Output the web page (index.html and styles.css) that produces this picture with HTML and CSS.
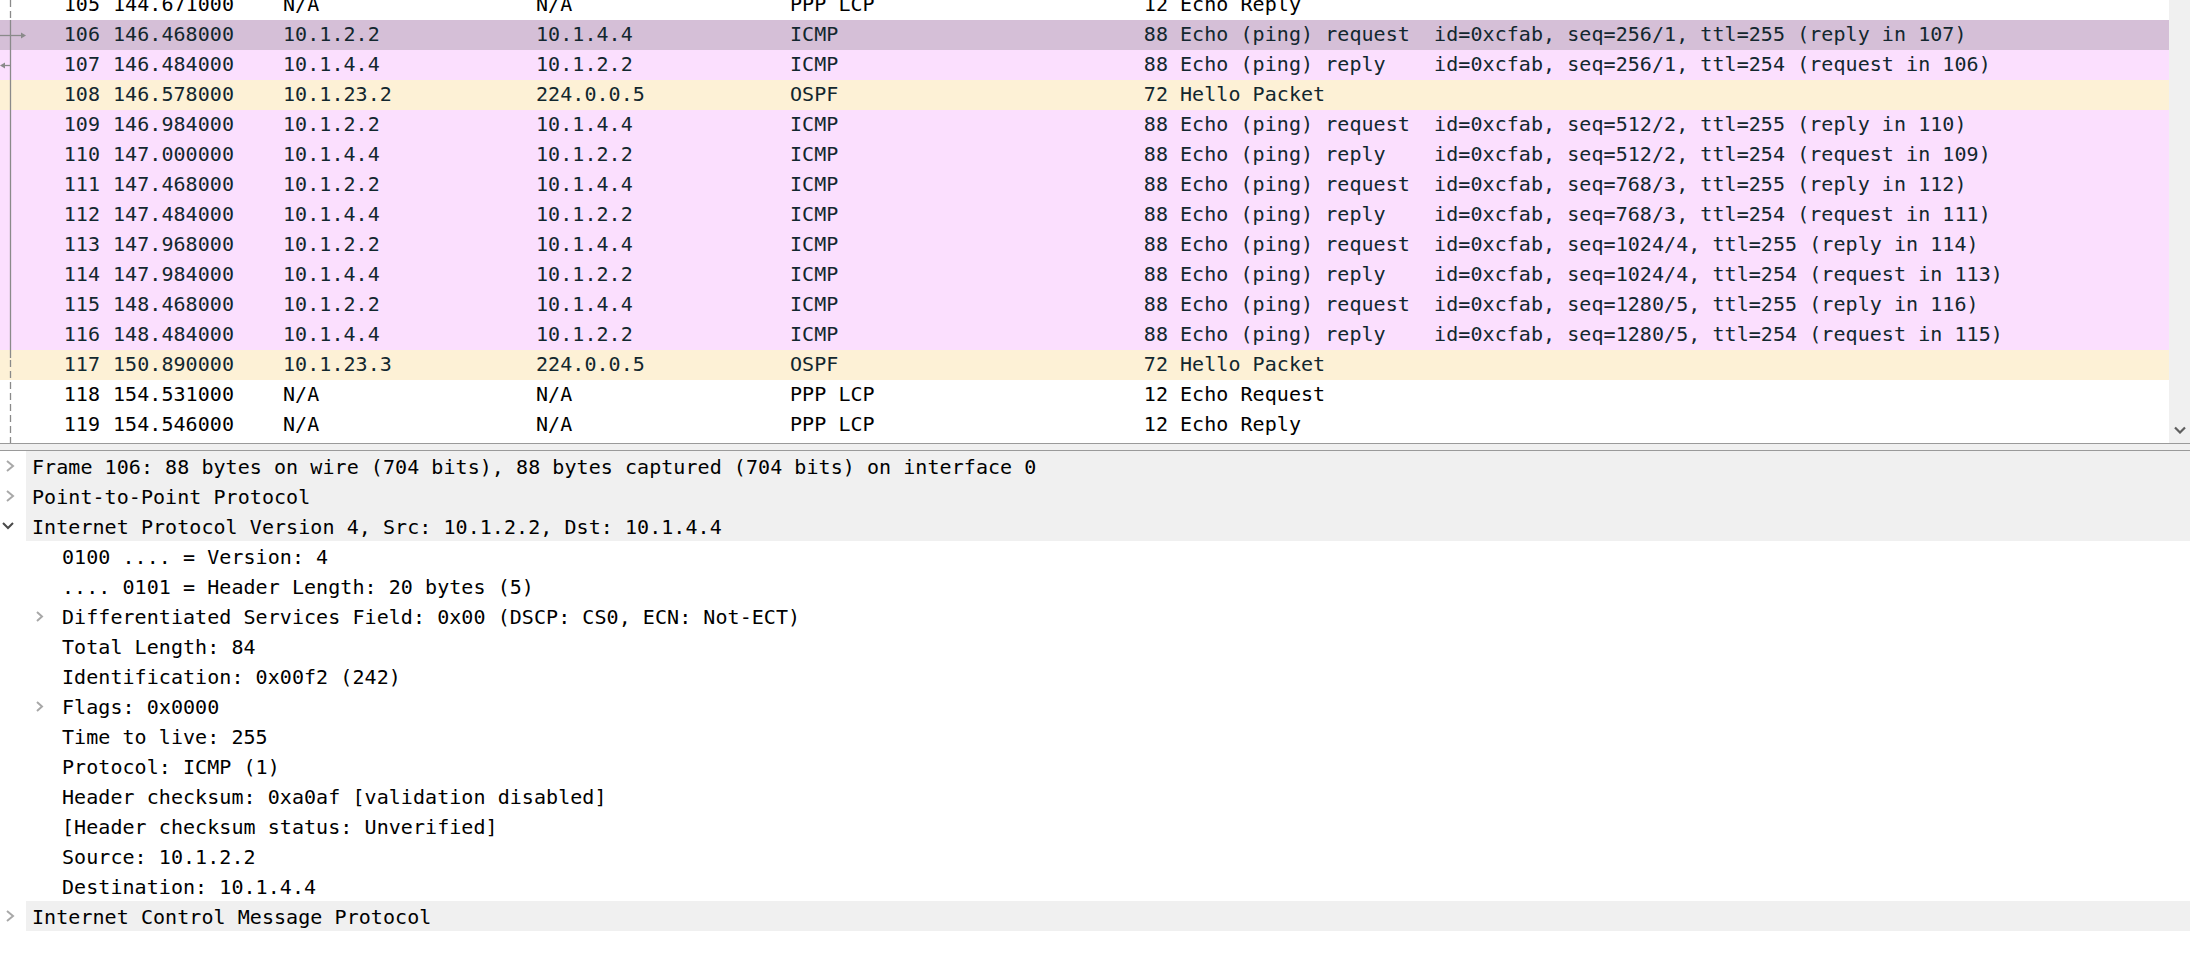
FILE: index.html
```html
<!DOCTYPE html>
<html>
<head>
<meta charset="utf-8">
<link rel="stylesheet" href="styles.css">
</head>
<body>
<div class="app">
  <div class="packet-list">
    <div class="rows">
      <div class="row plain first"><span class="c-no">105</span><span class="c-time">144.671000</span><span class="c-src">N/A</span><span class="c-dst">N/A</span><span class="c-proto">PPP LCP</span><span class="c-len">12</span><span class="c-info">Echo Reply</span></div>
      <div class="row selected"><span class="c-no">106</span><span class="c-time">146.468000</span><span class="c-src">10.1.2.2</span><span class="c-dst">10.1.4.4</span><span class="c-proto">ICMP</span><span class="c-len">88</span><span class="c-info">Echo (ping) request  id=0xcfab, seq=256/1, ttl=255 (reply in 107)</span></div>
      <div class="row icmp"><span class="c-no">107</span><span class="c-time">146.484000</span><span class="c-src">10.1.4.4</span><span class="c-dst">10.1.2.2</span><span class="c-proto">ICMP</span><span class="c-len">88</span><span class="c-info">Echo (ping) reply    id=0xcfab, seq=256/1, ttl=254 (request in 106)</span></div>
      <div class="row ospf"><span class="c-no">108</span><span class="c-time">146.578000</span><span class="c-src">10.1.23.2</span><span class="c-dst">224.0.0.5</span><span class="c-proto">OSPF</span><span class="c-len">72</span><span class="c-info">Hello Packet</span></div>
      <div class="row icmp"><span class="c-no">109</span><span class="c-time">146.984000</span><span class="c-src">10.1.2.2</span><span class="c-dst">10.1.4.4</span><span class="c-proto">ICMP</span><span class="c-len">88</span><span class="c-info">Echo (ping) request  id=0xcfab, seq=512/2, ttl=255 (reply in 110)</span></div>
      <div class="row icmp"><span class="c-no">110</span><span class="c-time">147.000000</span><span class="c-src">10.1.4.4</span><span class="c-dst">10.1.2.2</span><span class="c-proto">ICMP</span><span class="c-len">88</span><span class="c-info">Echo (ping) reply    id=0xcfab, seq=512/2, ttl=254 (request in 109)</span></div>
      <div class="row icmp"><span class="c-no">111</span><span class="c-time">147.468000</span><span class="c-src">10.1.2.2</span><span class="c-dst">10.1.4.4</span><span class="c-proto">ICMP</span><span class="c-len">88</span><span class="c-info">Echo (ping) request  id=0xcfab, seq=768/3, ttl=255 (reply in 112)</span></div>
      <div class="row icmp"><span class="c-no">112</span><span class="c-time">147.484000</span><span class="c-src">10.1.4.4</span><span class="c-dst">10.1.2.2</span><span class="c-proto">ICMP</span><span class="c-len">88</span><span class="c-info">Echo (ping) reply    id=0xcfab, seq=768/3, ttl=254 (request in 111)</span></div>
      <div class="row icmp"><span class="c-no">113</span><span class="c-time">147.968000</span><span class="c-src">10.1.2.2</span><span class="c-dst">10.1.4.4</span><span class="c-proto">ICMP</span><span class="c-len">88</span><span class="c-info">Echo (ping) request  id=0xcfab, seq=1024/4, ttl=255 (reply in 114)</span></div>
      <div class="row icmp"><span class="c-no">114</span><span class="c-time">147.984000</span><span class="c-src">10.1.4.4</span><span class="c-dst">10.1.2.2</span><span class="c-proto">ICMP</span><span class="c-len">88</span><span class="c-info">Echo (ping) reply    id=0xcfab, seq=1024/4, ttl=254 (request in 113)</span></div>
      <div class="row icmp"><span class="c-no">115</span><span class="c-time">148.468000</span><span class="c-src">10.1.2.2</span><span class="c-dst">10.1.4.4</span><span class="c-proto">ICMP</span><span class="c-len">88</span><span class="c-info">Echo (ping) request  id=0xcfab, seq=1280/5, ttl=255 (reply in 116)</span></div>
      <div class="row icmp"><span class="c-no">116</span><span class="c-time">148.484000</span><span class="c-src">10.1.4.4</span><span class="c-dst">10.1.2.2</span><span class="c-proto">ICMP</span><span class="c-len">88</span><span class="c-info">Echo (ping) reply    id=0xcfab, seq=1280/5, ttl=254 (request in 115)</span></div>
      <div class="row ospf"><span class="c-no">117</span><span class="c-time">150.890000</span><span class="c-src">10.1.23.3</span><span class="c-dst">224.0.0.5</span><span class="c-proto">OSPF</span><span class="c-len">72</span><span class="c-info">Hello Packet</span></div>
      <div class="row plain"><span class="c-no">118</span><span class="c-time">154.531000</span><span class="c-src">N/A</span><span class="c-dst">N/A</span><span class="c-proto">PPP LCP</span><span class="c-len">12</span><span class="c-info">Echo Request</span></div>
      <div class="row plain"><span class="c-no">119</span><span class="c-time">154.546000</span><span class="c-src">N/A</span><span class="c-dst">N/A</span><span class="c-proto">PPP LCP</span><span class="c-len">12</span><span class="c-info">Echo Reply</span></div>

      <svg class="related" width="30" height="443" viewBox="0 0 30 443">
        <line x1="10.5" y1="0" x2="10.5" y2="20" stroke="#8a8a8a" stroke-width="1.3" stroke-dasharray="7 4"/>
        <line x1="10.5" y1="20" x2="10.5" y2="358" stroke="#8a8a8a" stroke-width="1.3"/>
        <line x1="10.5" y1="360" x2="10.5" y2="443" stroke="#8a8a8a" stroke-width="1.3" stroke-dasharray="7 4"/>
        <line x1="0" y1="35.5" x2="22" y2="35.5" stroke="#8a8a8a" stroke-width="1.3"/>
        <polygon points="21,32.5 26,35.5 21,38.5" fill="#8a8a8a"/>
        <line x1="4" y1="65.5" x2="10.5" y2="65.5" stroke="#8a8a8a" stroke-width="1.3"/>
        <polygon points="5,62.5 0,65.5 5,68.5" fill="#8a8a8a"/>
      </svg>
    </div>
    <div class="vscroll">
      <svg width="12" height="8" viewBox="0 0 12 8"><polyline points="1,1.5 6,6.5 11,1.5" fill="none" stroke="#5f5f5f" stroke-width="2.2"/></svg>
    </div>
  </div>
  <div class="splitter"></div>
  <div class="details">
    <div class="node top">
      <span class="twisty"><svg width="10" height="12" viewBox="0 0 10 12"><polyline points="2,1 8,6 2,11" fill="none" stroke="#a8a8a8" stroke-width="2"/></svg></span>
      <span class="label">Frame 106: 88 bytes on wire (704 bits), 88 bytes captured (704 bits) on interface 0</span>
    </div>
    <div class="node top">
      <span class="twisty"><svg width="10" height="12" viewBox="0 0 10 12"><polyline points="2,1 8,6 2,11" fill="none" stroke="#a8a8a8" stroke-width="2"/></svg></span>
      <span class="label">Point-to-Point Protocol</span>
    </div>
    <div class="node top">
      <span class="twisty open"><svg width="12" height="8" viewBox="0 0 12 8"><polyline points="1,1 6,6 11,1" fill="none" stroke="#4a4a4a" stroke-width="2"/></svg></span>
      <span class="label">Internet Protocol Version 4, Src: 10.1.2.2, Dst: 10.1.4.4</span>
    </div>
    <div class="node child"><span class="twisty"></span><span class="label">0100 .... = Version: 4</span></div>
    <div class="node child"><span class="twisty"></span><span class="label">.... 0101 = Header Length: 20 bytes (5)</span></div>
    <div class="node child">
      <span class="twisty small"><svg width="9" height="11" viewBox="0 0 9 11"><polyline points="2,1 7,5.5 2,10" fill="none" stroke="#a8a8a8" stroke-width="2"/></svg></span>
      <span class="label">Differentiated Services Field: 0x00 (DSCP: CS0, ECN: Not-ECT)</span>
    </div>
    <div class="node child"><span class="twisty"></span><span class="label">Total Length: 84</span></div>
    <div class="node child"><span class="twisty"></span><span class="label">Identification: 0x00f2 (242)</span></div>
    <div class="node child">
      <span class="twisty small"><svg width="9" height="11" viewBox="0 0 9 11"><polyline points="2,1 7,5.5 2,10" fill="none" stroke="#a8a8a8" stroke-width="2"/></svg></span>
      <span class="label">Flags: 0x0000</span>
    </div>
    <div class="node child"><span class="twisty"></span><span class="label">Time to live: 255</span></div>
    <div class="node child"><span class="twisty"></span><span class="label">Protocol: ICMP (1)</span></div>
    <div class="node child"><span class="twisty"></span><span class="label">Header checksum: 0xa0af [validation disabled]</span></div>
    <div class="node child"><span class="twisty"></span><span class="label">[Header checksum status: Unverified]</span></div>
    <div class="node child"><span class="twisty"></span><span class="label">Source: 10.1.2.2</span></div>
    <div class="node child"><span class="twisty"></span><span class="label">Destination: 10.1.4.4</span></div>
    <div class="node top">
      <span class="twisty"><svg width="10" height="12" viewBox="0 0 10 12"><polyline points="2,1 8,6 2,11" fill="none" stroke="#a8a8a8" stroke-width="2"/></svg></span>
      <span class="label">Internet Control Message Protocol</span>
    </div>
  </div>
</div>
</body>
</html>
```

FILE: styles.css
```css
html, body {
  margin: 0;
  padding: 0;
  background: #ffffff;
}

body {
  width: 2190px;
  height: 954px;
  overflow: hidden;
  font-family: "DejaVu Sans Mono", "Liberation Mono", monospace;
  font-size: 20px;
  letter-spacing: 0.06px;
  color: #000000;
}

.app {
  display: flex;
  flex-direction: column;
  height: 954px;
}

/* ---------- packet list ---------- */
.packet-list {
  display: flex;
  height: 443px;
  border-bottom: 1px solid #9a9a9a;
  flex: none;
}

.rows {
  flex: 1;
  position: relative;
  overflow: hidden;
  background: #ffffff;
}

.row {
  display: grid;
  grid-template-columns: 107px 170px 253px 254px 216px 174px 1fr;
  height: 30px;
  line-height: 29px;
  white-space: pre;
}

.row.first {
  margin-top: -10px;
}

.row span {
  padding-left: 6px;
  overflow: hidden;
}

.row .c-no {
  text-align: right;
  padding-left: 0;
  padding-right: 7px;
}

.row .c-len {
  text-align: right;
  padding-left: 0;
  padding-right: 6px;
}

.row.plain {
  background: #ffffff;
  color: #000000;
}

.row.icmp {
  background: #fbdffe;
  color: #12272e;
}

.row.ospf {
  background: #fdf1d6;
  color: #12272e;
}

.row.selected {
  background: #d5bfd7;
  color: #12272e;
}

.related {
  position: absolute;
  left: 0;
  top: 0;
}

.vscroll {
  width: 21px;
  flex: none;
  background: #f0f0f0;
  display: flex;
  align-items: flex-end;
  justify-content: center;
  padding-bottom: 9px;
  box-sizing: border-box;
}

.vscroll svg {
  display: block;
}

/* ---------- splitter ---------- */
.splitter {
  height: 6px;
  background: #f0f0f0;
  border-bottom: 1px solid #9a9a9a;
  flex: none;
}

/* ---------- details tree ---------- */
.details {
  flex: 1;
  background: #ffffff;
}

.node {
  display: flex;
  height: 30px;
  line-height: 30px;
  white-space: pre;
}

.node.child {
  padding-left: 30px;
}

.twisty {
  width: 26px;
  flex: none;
  display: flex;
  align-items: center;
  padding-left: 5px;
  box-sizing: border-box;
}

.twisty.open {
  padding-left: 2px;
}

.twisty svg {
  display: block;
}

.label {
  flex: 1;
  padding-left: 6px;
  padding-top: 1px;
  box-sizing: border-box;
}

.node.top .label {
  background: #f0f0f0;
}
```
